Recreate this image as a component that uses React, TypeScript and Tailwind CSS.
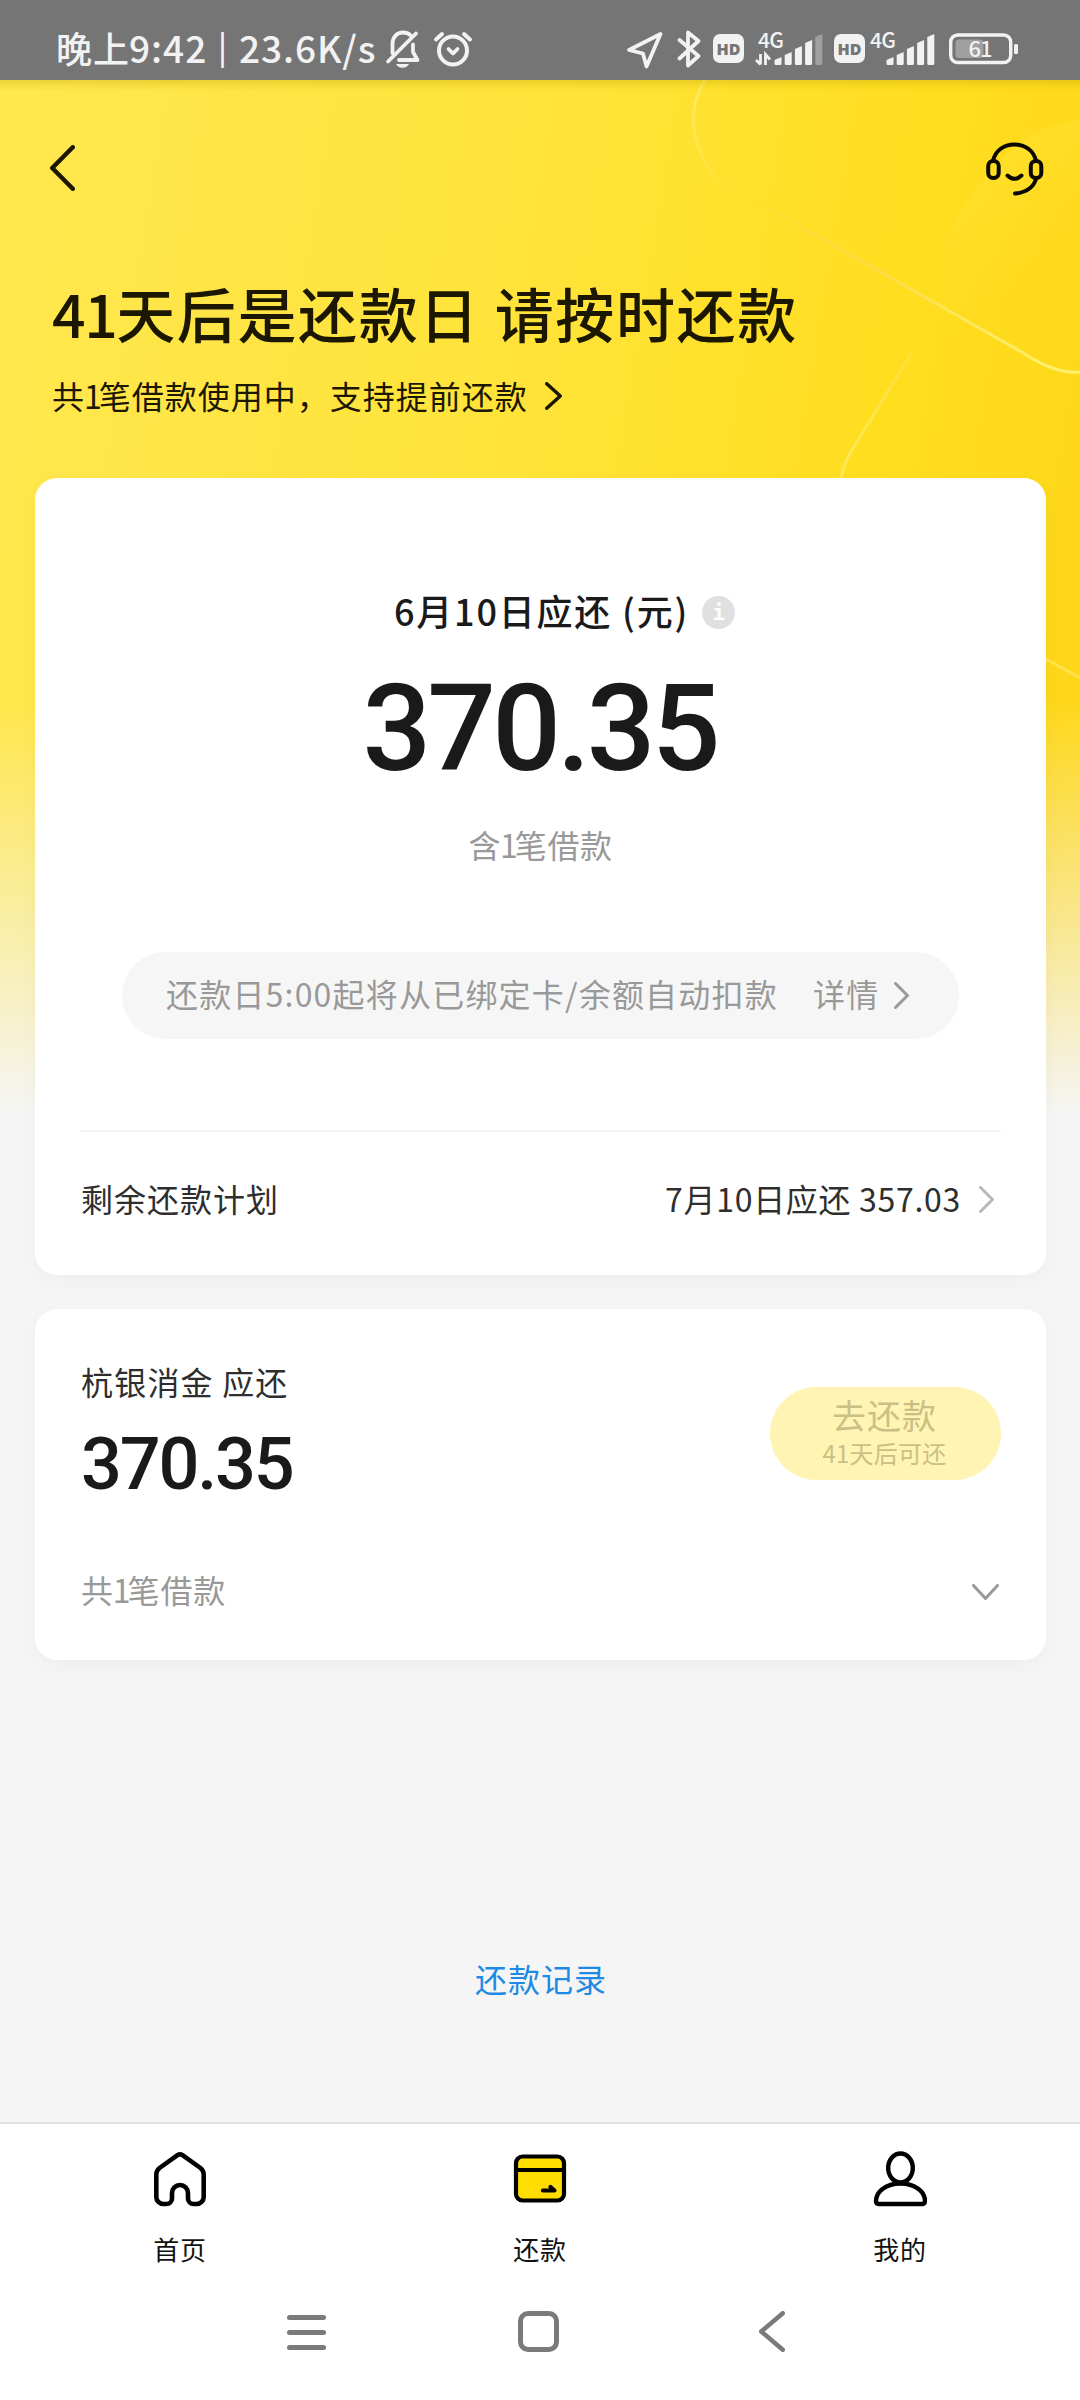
import type { ReactNode } from 'react';

interface ChevronProps {
  direction: 'left' | 'right' | 'down';
  width: number;
  height: number;
  stroke?: number;
  className?: string;
}

function Chevron({ direction, width, height, stroke = 3, className }: ChevronProps) {
  const p = stroke / 2;
  const points = {
    left: `${width - p},${p} ${p},${height / 2} ${width - p},${height - p}`,
    right: `${p},${p} ${width - p},${height / 2} ${p},${height - p}`,
    down: `${p},${p} ${width / 2},${height - p} ${width - p},${p}`,
  }[direction];
  return (
    <svg width={width} height={height} className={`shrink-0 ${className ?? ''}`} fill="none" stroke="currentColor">
      <polyline points={points} strokeWidth={stroke} strokeLinecap="round" strokeLinejoin="round" />
    </svg>
  );
}

function BellOffIcon() {
  return (
    <svg width="38" height="40" viewBox="0 0 38 40" fill="none" stroke="currentColor" strokeWidth="3.8" strokeLinecap="round" strokeLinejoin="round">
      <path d="M7.5 24V14.5C7.5 8 12 3.5 18 3.5c3 0 5.6 1 7.6 2.8" />
      <path d="M28 15.5V23l4.5 8H14" />
      <path d="M31 4.5 3 32.5" />
      <path d="M11 35h13c-1.2 2.4-3.5 3.8-6.5 3.8S12.2 37.4 11 35z" fill="currentColor" stroke="none" />
    </svg>
  );
}

function AlarmIcon() {
  return (
    <svg width="40" height="40" viewBox="0 0 40 40" fill="none" stroke="currentColor" strokeLinecap="round" strokeLinejoin="round">
      <circle cx="20" cy="21.5" r="14" strokeWidth="4" />
      <path d="m15.5 20 4.5 4.5 4.5-4.5" strokeWidth="3.8" />
      <path d="M3 10.5 9 5M37 10.5 31 5" strokeWidth="4" />
    </svg>
  );
}

function LocationIcon() {
  return (
    <svg width="36" height="40" viewBox="0 0 36 40" fill="none" stroke="currentColor" strokeWidth="3.8" strokeLinejoin="round">
      <path d="M33.5 5 2 21l14 3.5 3.5 13z" />
    </svg>
  );
}

function BluetoothIcon() {
  return (
    <svg width="24" height="40" viewBox="0 0 24 40" fill="none" stroke="currentColor" strokeWidth="3.8" strokeLinecap="round" strokeLinejoin="round">
      <path d="M2.5 11 21.5 27 11 36.5V3.5L21.5 12 2.5 29.5" />
    </svg>
  );
}

function HdBadge() {
  return (
    <span className="flex h-[29px] w-[31px] items-center justify-center rounded-[7px] bg-[#f2f2f2] font-['Open_Sans',sans-serif] text-[16px] font-extrabold leading-none text-[#757575]">
      HD
    </span>
  );
}

const signalTops = [27, 22, 16, 10, 4];

function Signal({ weak, transfer }: { weak?: boolean; transfer?: boolean }) {
  return (
    <svg width="68" height="38" viewBox="0 0 68 38" fill="currentColor" className="overflow-visible">
      <text x="3" y="17.5" fontSize="21" fontWeight="500" textLength="26" fontFamily="Noto Sans CJK SC, sans-serif">
        4G
      </text>
      {transfer && (
        <path d="M5.5 24v10.5M5.5 34.5 1 30M10.5 35V24.5l4.5 5" fill="none" stroke="currentColor" strokeWidth="2.8" />
      )}
      {signalTops.map((top, i) => (
        <path
          key={top}
          d={`M${19.5 + i * 10.2} ${top + 3}l7-3V33.5a1.5 1.5 0 0 1-1.5 1.5h-4a1.5 1.5 0 0 1-1.5-1.5z`}
          opacity={weak && i === 4 ? 0.35 : 1}
        />
      ))}
    </svg>
  );
}

function Battery() {
  return (
    <svg width="70" height="32" viewBox="0 0 70 32" className="overflow-visible">
      <rect x="1.7" y="2" width="60" height="27.5" rx="7" fill="none" stroke="currentColor" strokeWidth="3.4" />
      <rect x="6.5" y="6.5" width="28" height="18.5" rx="3.5" fill="#a0a0a0" />
      <rect x="65" y="11" width="4" height="10" rx="1.5" fill="currentColor" />
      <text x="19.5" y="23.8" fontSize="22" fontWeight="500" letterSpacing="-1" fill="currentColor" fontFamily="Noto Sans CJK SC, sans-serif">
        61
      </text>
    </svg>
  );
}

function HeadsetIcon() {
  return (
    <svg width="58" height="56" viewBox="0 0 58 56" fill="none" stroke="#0c0a00" strokeWidth="4" strokeLinecap="round">
      <path d="M7 20C9 10 17.5 3.5 28.5 3.5S48 10 50 20" />
      <rect x="2.2" y="20" width="10.5" height="17" rx="5" />
      <rect x="44.8" y="20" width="10.5" height="17" rx="5" />
      <path d="M21.5 34.5c4.5 4.2 9.5 4.2 14 0" />
      <path d="M50 38c-2.5 8-10 13.5-21 14.5" />
    </svg>
  );
}

function HomeIcon() {
  return (
    <svg width="54" height="56" viewBox="0 0 54 56" fill="none" stroke="#000" strokeWidth="4.6" strokeLinejoin="round">
      <path d="M24.5 4.2a4.5 4.5 0 0 1 5 0L47.5 17a8.5 8.5 0 0 1 3.2 6.5V46a7 7 0 0 1-7 7h-3.2a5.5 5.5 0 0 1-5.5-5.5V42a8 8 0 0 0-16 0v5.5a5.5 5.5 0 0 1-5.5 5.5h-3.2a7 7 0 0 1-7-7V23.5A8.5 8.5 0 0 1 6.5 17z" />
    </svg>
  );
}

function CardIcon() {
  return (
    <svg width="54" height="56" viewBox="0 0 54 56" stroke="#000">
      <rect x="3" y="5.5" width="48" height="44" rx="6.5" fill="#ffdd00" strokeWidth="4.2" />
      <path d="M3 19h48" strokeWidth="4.2" />
      <path d="M30 39.500h11.5l-4-3.5" fill="none" strokeWidth="4.2" strokeLinecap="round" strokeLinejoin="round" />
    </svg>
  );
}

function UserIcon() {
  return (
    <svg width="54" height="56" viewBox="0 0 54 56" fill="none" stroke="#000" strokeWidth="4.4">
      <ellipse cx="27.5" cy="17" rx="12.3" ry="14.5" />
      <path d="M27.500 32.500C13 32.500 3 40.500 3 50c0 2 1 3 3 3h43c2 0 3-1 3-3 0-9.500-10-17.500-24.500-17.500z" />
    </svg>
  );
}

function StatusBar() {
  return (
    <div className="flex h-20 shrink-0 items-start bg-[#757575] pt-[29px] text-[#f2f2f2]">
      <div className="ml-[56px] flex w-[329px] whitespace-pre text-[36px] font-medium leading-[36px]">
        <span className="w-[73px] tracking-[1px]">晚上</span>
        <span className="w-[89px] text-[37px] tracking-[1px]">9:42</span>
        <span className="w-[21px] text-[32px] leading-[33px]">|</span>
        <span className="text-[37px] tracking-[0.9px]">23.6K/s</span>
      </div>
      <BellOffIcon />
      <div className="ml-[10px]">
        <AlarmIcon />
      </div>
      <div className="ml-[154px] flex">
        <LocationIcon />
        <div className="ml-[14px]">
          <BluetoothIcon />
        </div>
        <div className="ml-[12px] mt-[5px]">
          <HdBadge />
        </div>
        <div className="ml-[11px] mt-px">
          <Signal weak transfer />
        </div>
        <div className="ml-[11px] mt-[5px]">
          <HdBadge />
        </div>
        <div className="ml-[2px] mt-px">
          <Signal />
        </div>
        <div className="ml-[14px] mt-[4px]">
          <Battery />
        </div>
      </div>
    </div>
  );
}

// Soft highlight curves over the yellow backdrop
function Backdrop() {
  return (
    <svg className="absolute left-0 top-20" width="1080" height="1040" viewBox="0 80 1080 1040" fill="none">
      <defs>
        <linearGradient id="base" x1="0" y1="300" x2="1080" y2="480" gradientUnits="userSpaceOnUse">
          <stop offset="0" stopColor="#ffe74e" />
          <stop offset="0.5" stopColor="#ffe338" />
          <stop offset="0.8" stopColor="#ffde20" />
          <stop offset="1" stopColor="#fed71a" />
        </linearGradient>
        <linearGradient id="fade" x1="0" y1="700" x2="0" y2="1115" gradientUnits="userSpaceOnUse">
          <stop offset="0" stopColor="#f5f5f5" stopOpacity="0" />
          <stop offset="1" stopColor="#f5f5f5" />
        </linearGradient>
        <linearGradient id="corner" x1="700" y1="80" x2="720" y2="200" gradientUnits="userSpaceOnUse">
          <stop offset="0" stopColor="#ffea60" />
          <stop offset="0.5" stopColor="#ffea60" stopOpacity="0.7" />
          <stop offset="1" stopColor="#ffea60" stopOpacity="0" />
        </linearGradient>
        <linearGradient id="curve" x1="720" y1="160" x2="1060" y2="340" gradientUnits="userSpaceOnUse">
          <stop offset="0" stopColor="#ffd83c" stopOpacity="0" />
          <stop offset="0.5" stopColor="#ffdc46" />
          <stop offset="1" stopColor="#fff06e" />
        </linearGradient>
        <linearGradient id="orb" x1="970" y1="160" x2="1050" y2="260" gradientUnits="userSpaceOnUse">
          <stop offset="0" stopColor="#ffe436" stopOpacity="0.5" />
          <stop offset="1" stopColor="#ffe436" stopOpacity="0" />
        </linearGradient>
        <linearGradient id="diagonal" x1="920" y1="270" x2="850" y2="470" gradientUnits="userSpaceOnUse">
          <stop offset="0" stopColor="#ffe75a" stopOpacity="0" />
          <stop offset="1" stopColor="#ffe75a" />
        </linearGradient>
        <linearGradient id="top" x1="0" y1="80" x2="0" y2="92" gradientUnits="userSpaceOnUse">
          <stop offset="0" stopColor="#b89d00" stopOpacity="0.3" />
          <stop offset="1" stopColor="#e0c000" stopOpacity="0" />
        </linearGradient>
      </defs>
      <rect y="80" width="1080" height="1040" fill="url(#base)" />
      <path d="M945 240C970 195 1010 125 1080 120V372Q1055 374 1020 351L945 308z" fill="url(#orb)" />
      <path d="M705 80C690 105 690 130 702 155C708 172 720 185 745 195" stroke="url(#corner)" strokeWidth="3" />
      <path d="M745 195 1025 354Q1055 374 1080 372" stroke="url(#curve)" strokeWidth="3" />
      <path d="M912 352 855 445Q844 462 841 478" stroke="url(#diagonal)" strokeWidth="3" />
      <path d="M1046 659 1080 678" stroke="#ffe75a" strokeWidth="3" opacity="0.8" />
      <rect y="700" width="1080" height="420" fill="url(#fade)" />
      <rect y="80" width="1080" height="12" fill="url(#top)" />
    </svg>
  );
}

function Card({ className, children }: { className?: string; children: ReactNode }) {
  return (
    <section className={`ml-[35px] mr-[34px] flex flex-col rounded-[22px] bg-white shadow-[0_6px_20px_rgba(0,0,0,0.03)] ${className ?? ''}`}>
      {children}
    </section>
  );
}

// The numeral one sits tighter than the ideographs around it
function One() {
  return <span className="-ml-px tracking-[-3px]">1</span>;
}

const tabs = [
  { label: '首页', icon: <HomeIcon /> },
  { label: '还款', icon: <CardIcon /> },
  { label: '我的', icon: <UserIcon /> },
];

export default function App() {
  return (
    <div className="relative flex h-[2400px] w-[1080px] flex-col overflow-hidden bg-[#f5f5f5] font-['Noto_Sans_CJK_SC',sans-serif] text-[#1a1a1a]">
      <StatusBar />
      <Backdrop />

      <main className="relative flex flex-1 flex-col">
        <header className="flex h-[398px] shrink-0 flex-col text-[#1c1700]">
          <div className="flex items-start justify-between pl-[50px] pr-[36px] pt-[61px]">
            <Chevron direction="left" width={25} height={46} stroke={4.5} className="mt-[4px]" />
            <HeadsetIcon />
          </div>
          <h1 className="mt-[80px] whitespace-pre pl-[52px] text-[59px] font-medium leading-[72px] tracking-[1.6px]">
            <span className="tracking-[-1.5px]">41</span>天后是还款日 请按时还款
          </h1>
          <div className="mt-[25px] flex items-center pl-[52px]">
            <p className="w-[493px] whitespace-nowrap text-[32px] leading-[42px] tracking-[1px]">
              共<One />笔借款使用中，支持提前还款
            </p>
            <Chevron direction="right" width={17} height={28} stroke={3.5} className="mt-[2px]" />
          </div>
        </header>

        <Card className="h-[797px] shrink-0">
          <div className="flex items-center pl-[359px] pt-[107px]">
            <span className="w-[308px] whitespace-pre text-[36px] font-medium leading-[50px] tracking-[1.8px]">
              6月10日应还 (元)
            </span>
            <span className="mt-[4px] flex size-[33px] items-center justify-center rounded-full bg-[#e0e0e0] pt-[2px] font-['DejaVu_Sans_Mono',monospace] text-[21px] font-bold leading-none text-white">
              i
            </span>
          </div>
          <div className="mt-[24px] pr-[2px] text-center font-[Roboto,sans-serif] text-[121px] font-medium leading-[140px] tracking-[-3.9px]">
            370.35
          </div>
          <div className="mt-[24px] text-center text-[32px] leading-[42px] tracking-[0.6px] text-[#999]">
            含<One />笔借款
          </div>
          <button className="mx-[87px] mt-[87px] flex h-[87px] items-center rounded-full bg-[#f6f6f6] pb-[5px] pl-[44px] text-[32px] leading-[42px] tracking-[1.2px] text-[#999]">
            <span className="w-[647px] whitespace-nowrap text-left">还款日5:00起将从已绑定卡/余额自动扣款</span>
            <span className="w-[81px] text-left">详情</span>
            <Chevron direction="right" width={15} height={27} className="mt-[5px]" />
          </button>
          <div className="mx-[45px] mt-[91px] h-[2px] bg-[#f3f3f3]" />
          <div className="flex items-center pl-[46px] pr-[52px] pt-[45px] text-[32px] leading-[42px] text-[#2e2e2e]">
            <span className="tracking-[1px]">剩余还款计划</span>
            <span className="ml-auto mr-[18px] whitespace-pre tracking-[0.7px]">7月10日应还 357.03</span>
            <Chevron direction="right" width={15} height={27} className="mt-[3px] text-[#b8b8b8]" />
          </div>
        </Card>

        <Card className="mt-[34px] h-[351px] shrink-0">
          <div className="flex justify-between pl-[46px] pr-[45px] pt-[50px]">
            <div>
              <div className="mt-px whitespace-pre text-[32px] leading-[42px] tracking-[1.2px] text-[#2e2e2e]">杭银消金 应还</div>
              <div className="mt-[21px] font-[Roboto,sans-serif] text-[72px] font-medium leading-[84px] tracking-[-2.2px]">370.35</div>
            </div>
            <button className="mt-[28px] flex h-[93px] w-[231px] flex-col items-center rounded-full bg-[#fff4b3] pr-[2px] pt-[8px] text-[#cbbf85]">
              <span className="text-[34px] leading-[40px] tracking-[1px]">去还款</span>
              <span className="mt-[3px] text-[24px] leading-[30px] tracking-[0.2px]">41天后可还</span>
            </button>
          </div>
          <div className="mt-[61px] flex items-center justify-between pl-[46px] pr-[47px] text-[32px] leading-[42px] tracking-[0.8px] text-[#999]">
            <span>
              共<One />笔借款
            </span>
            <Chevron direction="down" width={27} height={16} className="mt-[6px]" />
          </div>
        </Card>

        <a className="mt-[297px] pl-[2px] text-center text-[32px] leading-[42px] tracking-[1px] text-[#1f8ae6]">还款记录</a>
      </main>

      <nav className="relative grid h-[163px] shrink-0 grid-cols-3 border-t-2 border-[#e0e0e0] bg-white pt-[27px]">
        {tabs.map((tab) => (
          <div key={tab.label} className="flex flex-col items-center">
            {tab.icon}
            <span className="mt-[24px] text-[26px] leading-[36px] tracking-[0.8px] text-[#111]">{tab.label}</span>
          </div>
        ))}
      </nav>

      {/* Android navigation keys */}
      <div className="relative flex h-[115px] shrink-0 items-start bg-white pl-[287px] pt-[24px] text-[#7a7a7a]">
        <div className="mt-[6px] flex w-[39px] flex-col gap-[10px]">
          <span className="h-[5px] rounded-full bg-[#7a7a7a]" />
          <span className="h-[5px] rounded-full bg-[#7a7a7a]" />
          <span className="h-[5px] rounded-full bg-[#7a7a7a]" />
        </div>
        <div className="ml-[192px] mt-[2px] size-[41px] rounded-[10px] border-[5px] border-[#7a7a7a]" />
        <Chevron direction="left" width={26} height={41} stroke={4.5} className="ml-[200px] mt-[2px]" />
      </div>
    </div>
  );
}
